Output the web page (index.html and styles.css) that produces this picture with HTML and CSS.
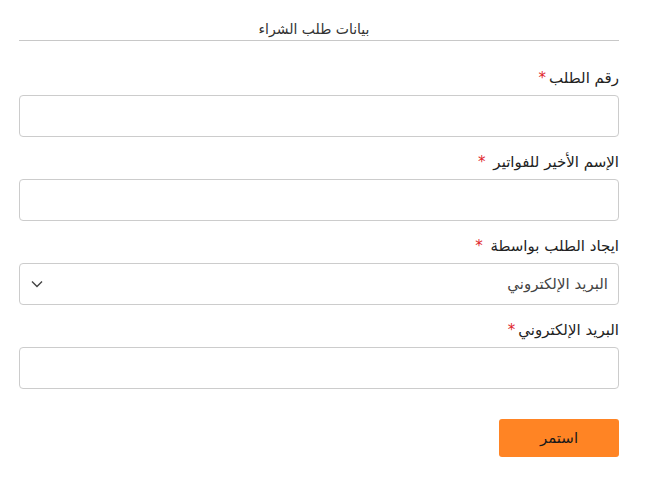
FILE: index.html
```html
<!DOCTYPE html>
<html lang="ar" dir="rtl">

<head>
    <meta charset="UTF-8">
    <meta name="viewport" content="width=device-width, initial-scale=1.0">
    <title>بيانات طلب الشراء</title>
    <link rel="stylesheet" href="styles.css">
</head>

<body>
    <div class="caixa">
        <div class="titulo">بيانات طلب الشراء</div>

        <form id="orderForm">
            <div class="campo">
                <label for="orderNumber" class="texto">رقم الطلب<span class="req">*</span></label>
                <input class="input" type="text" id="orderNumber">
            </div>

            <div class="campo">
                <label for="lastName" class="texto">الإسم الأخير للفواتير <span class="req">*</span></label>
                <input class="input" type="text" id="lastName">
            </div>

            <div class="campo">
                <label for="findBy" class="texto">ايجاد الطلب بواسطة <span class="req">*</span></label>
                <div class="select">
                    <span>البريد الإلكتروني</span>
                    <svg class="seta" width="12" height="8" viewBox="0 0 12 8">
                        <path d="M1 1.5 L6 6.5 L11 1.5" fill="none" stroke="#444" stroke-width="1.4"/>
                    </svg>
                </div>
            </div>

            <div class="campo">
                <label for="email" class="texto">البريد الإلكتروني<span class="req">*</span></label>
                <input class="input" type="text" id="email">
            </div>

            <div class="acoes">
                <button type="button" id="botao">استمر</button>
            </div>
        </form>
    </div>
</body>
</html>
```

FILE: styles.css
```css
body {
    font-family: "DejaVu Sans", "Noto Sans", sans-serif;
    margin: 0;
    background-color: #ffffff;
    color: #222222;
}

.caixa {
    width: 600px;
    margin: 0 39px 0 19px;
    padding-top: 20px;
}

.titulo {
    text-align: center;
    font-size: 14px;
    color: #333333;
    line-height: 18px;
    padding-bottom: 2px;
    padding-right: 10px;
    border-bottom: 1px solid #c8c8c8;
}

#orderForm {
    display: flex;
    flex-direction: column;
    padding-top: 27px;
}

.campo {
    display: flex;
    flex-direction: column;
    gap: 7px;
    margin-bottom: 15px;
}

.texto {
    font-size: 15px;
    line-height: 20px;
    color: #222222;
}

.req {
    color: #e0262b;
    margin-right: 3px;
}

.input,
.select {
    box-sizing: border-box;
    height: 42px;
    width: 100%;
    border: 1px solid #cccccc;
    border-radius: 4px;
    background: #ffffff;
    margin: 0;
}

.select {
    display: flex;
    align-items: center;
    justify-content: space-between;
    padding: 0 10px 0 11px;
    font-size: 15px;
    color: #444444;
}

.seta {
    display: block;
}

.acoes {
    display: flex;
    padding-top: 15px;
}

#botao {
    width: 120px;
    height: 38px;
    border: 0;
    border-radius: 3px;
    background: #ff8424;
    color: #1a1a1a;
    font-family: inherit;
    font-size: 15px;
    cursor: pointer;
}
```
